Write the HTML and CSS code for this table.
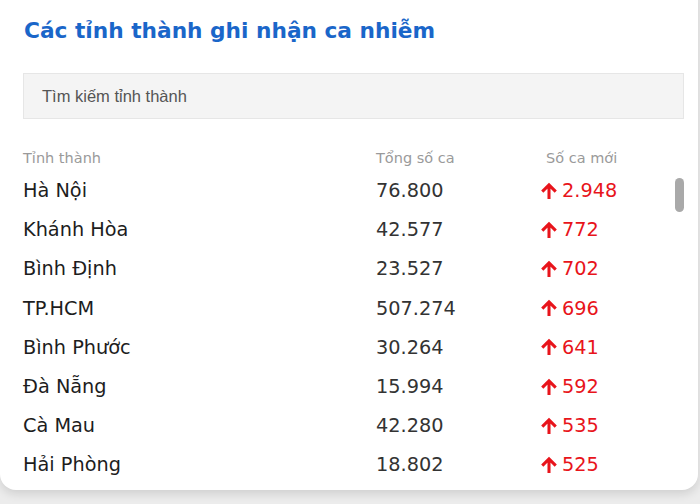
FILE: index.html
```html
<!DOCTYPE html>
<html lang="vi">
<head>
<meta charset="utf-8">
<link rel="stylesheet" href="styles.css">
</head>
<body>
<div class="card">
  <h2 class="title">Các tỉnh thành ghi nhận ca nhiễm</h2>
  <div class="search">Tìm kiếm tỉnh thành</div>
  <div class="table">
    <div class="row head">
      <span>Tỉnh thành</span><span>Tổng số ca</span><span class="newh">Số ca mới</span>
    </div>
    <div class="body">
      <div class="row"><span>Hà Nội</span><span class="num">76.800</span><span class="new"><svg viewBox="0 0 16 16"><path d="M8 15V2.5M2 8.5L8 2.5l6 6"/></svg>2.948</span></div>
      <div class="row"><span>Khánh Hòa</span><span class="num">42.577</span><span class="new"><svg viewBox="0 0 16 16"><path d="M8 15V2.5M2 8.5L8 2.5l6 6"/></svg>772</span></div>
      <div class="row"><span>Bình Định</span><span class="num">23.527</span><span class="new"><svg viewBox="0 0 16 16"><path d="M8 15V2.5M2 8.5L8 2.5l6 6"/></svg>702</span></div>
      <div class="row"><span>TP.HCM</span><span class="num">507.274</span><span class="new"><svg viewBox="0 0 16 16"><path d="M8 15V2.5M2 8.5L8 2.5l6 6"/></svg>696</span></div>
      <div class="row"><span>Bình Phước</span><span class="num">30.264</span><span class="new"><svg viewBox="0 0 16 16"><path d="M8 15V2.5M2 8.5L8 2.5l6 6"/></svg>641</span></div>
      <div class="row"><span>Đà Nẵng</span><span class="num">15.994</span><span class="new"><svg viewBox="0 0 16 16"><path d="M8 15V2.5M2 8.5L8 2.5l6 6"/></svg>592</span></div>
      <div class="row"><span>Cà Mau</span><span class="num">42.280</span><span class="new"><svg viewBox="0 0 16 16"><path d="M8 15V2.5M2 8.5L8 2.5l6 6"/></svg>535</span></div>
      <div class="row"><span>Hải Phòng</span><span class="num">18.802</span><span class="new"><svg viewBox="0 0 16 16"><path d="M8 15V2.5M2 8.5L8 2.5l6 6"/></svg>525</span></div>
      <div class="scrollbar"></div>
    </div>
  </div>
</div>
</body>
</html>
```
FILE: styles.css
```css
html, body {
  margin: 0;
  padding: 0;
  background: #ececec;
  width: 700px;
  height: 504px;
  overflow: hidden;
}
.card {
  box-sizing: border-box;
  margin-top: -20px;
  width: 698px;
  height: 510px;
  background: #fff;
  border-radius: 16px;
  box-shadow: 0 4px 10px rgba(0,0,0,0.12);
  padding: 35px 14px 0 23px;
  font-family: "DejaVu Sans", sans-serif;
}
.title {
  margin: 0 0 0 1px;
  font-size: 21.7px;
  line-height: 32px;
  font-weight: bold;
  color: #1a66c9;
}
.search {
  margin-top: 26px;
  height: 46px;
  box-sizing: border-box;
  background: #f4f4f4;
  border: 1px solid #e6e6e6;
  padding-left: 18px;
  display: flex;
  align-items: center;
  font-family: "Liberation Sans", Arial, sans-serif;
  font-size: 16.5px;
  color: #555;
}
.table {
  margin-top: 28px;
}
.row {
  display: grid;
  grid-template-columns: 353px 164px 1fr;
  align-items: center;
  height: 39.2px;
  font-size: 19.3px;
  color: #1d1d1d;
}
.row.head {
  height: 22px;
  font-size: 14.5px;
  color: #9a9a9a;
}
.newh { padding-left: 6px; }
.body { position: relative; margin-top: 2px; }
.num { color: #333; }
.new {
  color: #e8141b;
  display: flex;
  align-items: center;
  gap: 4px;
}
.new svg {
  width: 18px;
  height: 18px;
  fill: none;
  stroke: #e8141b;
  stroke-width: 2.7;
}
.scrollbar {
  position: absolute;
  right: 0;
  top: 7px;
  width: 9px;
  height: 34px;
  border-radius: 5px;
  background: #a9a9a9;
}
```
